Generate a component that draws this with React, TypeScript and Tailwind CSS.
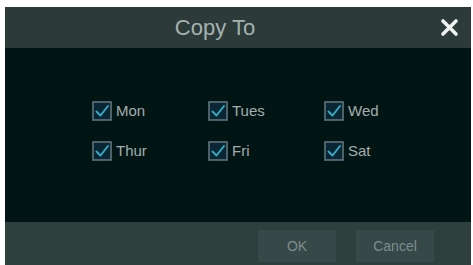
import React from "react";

const days = ["Mon", "Tues", "Wed", "Thur", "Fri", "Sat"];

function Check() {
  return (
    <svg width="20" height="20" viewBox="0 0 20 20" className="shrink-0">
      <rect x="1" y="1" width="18" height="18" fill="#0a2533" stroke="#5f747a" strokeWidth="1.6" />
      <path d="M4.5 10.5 L8.5 14.5 L16 5" fill="none" stroke="#36a9c2" strokeWidth="2" strokeLinecap="round" strokeLinejoin="round" />
    </svg>
  );
}

export default function App() {
  return (
    <div className="w-[473px] h-[265px] bg-white pt-[7px] pl-[5px] pr-[2px] overflow-hidden" style={{ fontFamily: "'Liberation Sans', Arial, sans-serif" }}>
      <div className="flex flex-col h-[258px]">
        <div className="h-[41px] bg-[#2c3b39] flex items-center relative">
          <div className="w-[420px] text-center text-[22px] text-[#a5b2b0]">Copy To</div>
          <svg className="absolute left-[435px] top-[11px]" width="19" height="19" viewBox="0 0 19 19">
            <path d="M3 3 L16 16 M16 3 L3 16" stroke="#eef2f1" strokeWidth="3.6" strokeLinecap="round" />
          </svg>
        </div>
        <div className="h-[174px] bg-[#021515] pt-[53px] pl-[87px]">
          <div className="grid grid-cols-[116px_116px_116px] gap-y-[20px]">
            {days.map((d) => (
              <div key={d} className="flex items-center gap-[4px] h-[20px]">
                <Check />
                <span className="text-[15px] text-[#a3adad]">{d}</span>
              </div>
            ))}
          </div>
        </div>
        <div className="flex-1 bg-[#2e3f3e] flex items-start pt-[8px] pl-[253px] gap-[20px]">
          <div className="w-[78px] h-[32px] bg-[#364847] flex items-center justify-center text-[14px] text-[#7f8e8c]">OK</div>
          <div className="w-[78px] h-[32px] bg-[#364847] flex items-center justify-center text-[14px] text-[#7f8e8c]">Cancel</div>
        </div>
      </div>
    </div>
  );
}
